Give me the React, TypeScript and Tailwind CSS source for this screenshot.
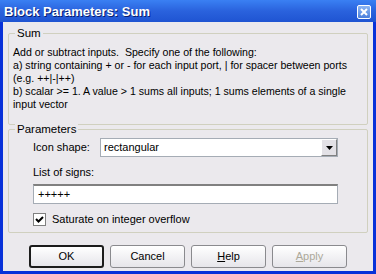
import React from 'react';

const font = { fontFamily: '"Liberation Sans", Arial, sans-serif' };

const Button = ({ label, accel, rest, isDefault, disabled }: { label?: string; accel?: string; rest?: string; isDefault?: boolean; disabled?: boolean }) => (
  <div
    className={`w-[75px] h-[23px] flex items-center justify-center text-[11px] rounded-[3px] bg-gradient-to-b from-[#ffffff] to-[#e6e5ea] ${
      isDefault ? 'border-2 border-[#1c1c1c]' : 'border border-[#8a8a8e]'
    } ${disabled ? 'text-[#aca899]' : 'text-black'}`}
  >
    {label ? label : (
      <span>
        <span className="underline">{accel}</span>
        {rest}
      </span>
    )}
  </div>
);

const GroupBox = ({ title, className, children }: { title: string; className?: string; children: React.ReactNode }) => (
  <div className={`relative border border-[#d0d0bf] rounded-[2px] ${className ?? ''}`}>
    <span className="absolute -top-[8px] left-[6px] px-[2px] bg-[#ebe9ed] text-[11.5px] leading-[14px] text-black">{title}</span>
    {children}
  </div>
);

export default function App() {
  return (
    <div className="w-[376px] h-[274px] bg-[#0831d9] flex flex-col overflow-hidden" style={font}>
      {/* title bar */}
      <div className="h-[22px] shrink-0 flex items-center justify-between pl-[4px] pr-[5px] bg-gradient-to-b from-[#3a80f3] via-[#2a62dd] to-[#1f54d2]">
        <span className="text-white font-bold text-[13px] leading-none [text-shadow:1px_1px_0_#0a1e6e]">Block Parameters: Sum</span>
        <div className="w-[14px] h-[14px] mt-[1px] rounded-[2px] border border-white bg-gradient-to-b from-[#8eb6f3] to-[#4b7fdc] flex items-center justify-center">
          <svg width="8" height="8" viewBox="0 0 8 8">
            <path d="M1 1 L7 7 M7 1 L1 7" stroke="white" strokeWidth="2" />
          </svg>
        </div>
      </div>

      {/* body */}
      <div className="flex-1 mx-[3px] mb-[3px] bg-[#ebe9ed] flex flex-col px-[5px] pt-[11px]">
        <GroupBox title="Sum" className="h-[92px] pt-[12px] pl-[4px] pr-[4px]">
          <div className="text-[10.6px] leading-[13px] text-black">
            <div>Add or subtract inputs.&nbsp; Specify one of the following:</div>
            <div>a) string containing + or - for each input port, | for spacer between ports</div>
            <div>(e.g. ++|-|++)</div>
            <div>b) scalar &gt;= 1. A value &gt; 1 sums all inputs; 1 sums elements of a single</div>
            <div>input vector</div>
          </div>
        </GroupBox>

        <GroupBox title="Parameters" className="mt-[4px] h-[104px] pl-[24px] pr-[29px] pt-[8px]">
          <div className="flex items-center">
            <span className="w-[67px] text-[11px] text-black">Icon shape:</span>
            <div className="flex-1 h-[19px] bg-white border border-[#a5acb5] flex items-center">
              <span className="flex-1 pl-[3px] text-[11px] text-black">rectangular</span>
              <div className="w-[16px] h-[17px] bg-[#e3e1e6] border-l border-t border-white border-r border-b border-r-[#808080] border-b-[#808080] flex items-center justify-center">
                <svg width="7" height="4" viewBox="0 0 7 4">
                  <path d="M0 0 H7 L3.5 4 Z" fill="black" />
                </svg>
              </div>
            </div>
          </div>
          <div className="mt-[9px] text-[11px] leading-[13px] text-black">List of signs:</div>
          <div className="mt-[5px] h-[20px] bg-white border border-[#a5acb5] border-t-2 border-t-[#808080] flex items-center pl-[4px] text-[11px] text-black">+++++</div>
          <div className="mt-[7px] flex items-center">
            <div className="w-[13px] h-[13px] bg-white border border-[#808080] flex items-center justify-center">
              <svg width="9" height="9" viewBox="0 0 9 9">
                <path d="M1 4 L3.5 6.5 L8 2" stroke="black" strokeWidth="2" fill="none" />
              </svg>
            </div>
            <span className="ml-[6px] text-[11px] text-black">Saturate on integer overflow</span>
          </div>
        </GroupBox>

        <div className="mt-[12px] flex gap-[6px] pl-[21px]">
          <Button label="OK" isDefault />
          <Button label="Cancel" />
          <Button accel="H" rest="elp" />
          <Button accel="A" rest="pply" disabled />
        </div>
      </div>
    </div>
  );
}
